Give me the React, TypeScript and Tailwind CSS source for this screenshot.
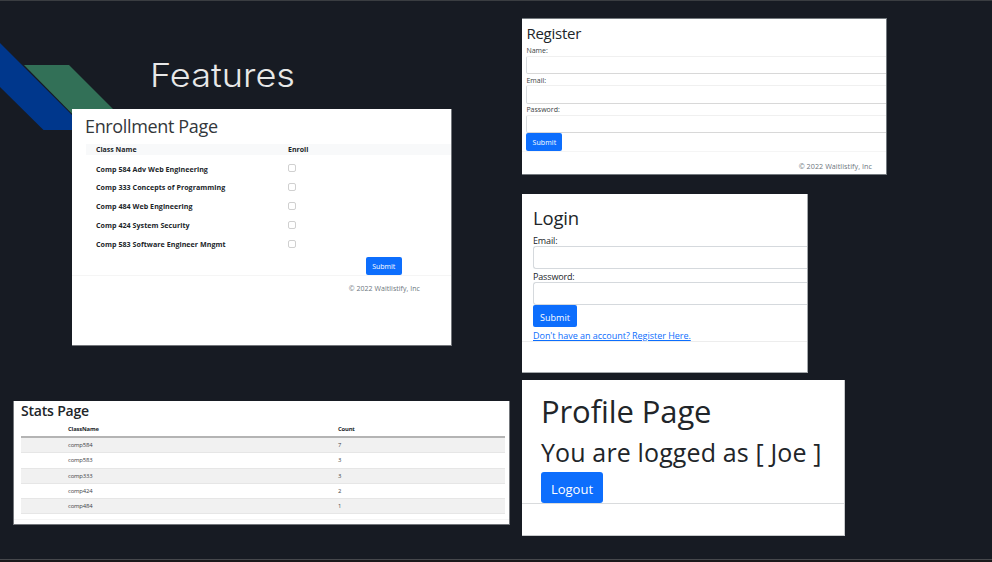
import type { ReactNode } from "react";

const classes = [
  "Comp 584 Adv Web Engineering",
  "Comp 333 Concepts of Programming",
  "Comp 484 Web Engineering",
  "Comp 424 System Security",
  "Comp 583 Software Engineer Mngmt",
];

const stats: [string, number][] = [
  ["comp584", 7],
  ["comp583", 3],
  ["comp333", 3],
  ["comp424", 2],
  ["comp484", 1],
];

function SmallField({ label }: { label: string }) {
  return (
    <label className="block h-[29.5px]">
      <span className="block h-[8.5px] text-[7px] leading-[8px] whitespace-nowrap text-[#3b3f43]">{label}</span>
      <span className="block h-[18.5px] rounded-l-[2px] border border-r-0 border-t-[#f0f0f0] border-b-[#d8d8d8] border-l-[#d8dbde]" />
    </label>
  );
}

function LoginField({ label }: { label: string }) {
  return (
    <label className="block h-[36px]">
      <span className="block h-[13px] text-[9px] leading-[15px] tracking-[-0.15px] whitespace-nowrap">{label}</span>
      <span className="block h-[23px] rounded-l-[3px] border border-r-0 border-[#d5d9dd]" />
    </label>
  );
}

function Card({ className, children }: { className: string; children: ReactNode }) {
  return <section className={`overflow-hidden bg-white ${className}`}>{children}</section>;
}

export default function App() {
  return (
    <main className="relative flex h-[562px] w-[992px] flex-col overflow-hidden bg-[#171b23] font-['Open_Sans','Noto_Sans',sans-serif] text-[#212529]">
      <svg className="absolute top-0 left-0" width="120" height="140" viewBox="0 0 120 140">
        <path d="M24 65H69L115 111V140H98Z" fill="#327057" />
        <path d="M0 43L87 130H43.500L0 87Z" fill="#00378c" />
      </svg>
      <div className="h-px shrink-0 bg-[#3a3d41]" />
      <div className="relative flex h-[558px] shrink-0">
        <div className="flex w-[522px] shrink-0 flex-col">
          <h1 className="mt-[53px] ml-[150px] h-[40px] w-[200px] origin-left scale-x-[1.095] font-['Inter',sans-serif] text-[33px] leading-[42px] font-light whitespace-nowrap text-[#e8e8e8]">
            Features
          </h1>

          <Card className="mt-[15px] ml-[72px] h-[237px] w-[380px] shrink-0 border-r border-b border-[#73767b]">
            <h2 className="mt-[6px] ml-[13px] h-[24px] text-[18px] leading-[23px] tracking-[-0.35px] whitespace-nowrap text-[#33373b]">Enrollment Page</h2>
            <div className="mt-[5px] ml-[14px] flex h-[11px] items-center bg-[#f8f9fa] pl-[10px] text-[7px] leading-[12px] font-bold">
              <span className="w-[192px]">Class Name</span>
              <span>Enroll</span>
            </div>
            <div className="mt-[4px] ml-[24px]">
              {classes.map((name) => (
                <div key={name} className="flex h-[18.8px] items-center text-[7.1px] font-bold tracking-[0.04px] whitespace-nowrap">
                  <span className="w-[192px] pt-px">{name}</span>
                  <span className="size-[8px] rounded-[2px] border border-[#d0d0d0]" />
                </div>
              ))}
            </div>
            <button className="mt-[4px] ml-[294px] block h-[18px] w-[35.500px] rounded-[2px] bg-[#0d6efd] text-[7px] leading-[20px] text-white">Submit</button>
            <div className="h-px bg-[#f5f5f5]" />
            <p className="mt-[8px] mr-[31px] text-right text-[7px] leading-[10px] tracking-[0.04px] text-[#6c757d]">© 2022 Waitlistify, Inc</p>
          </Card>

          <Card className="mt-[55px] ml-[13px] h-[124px] w-[497px] shrink-0 border-r border-b border-l border-[#73767b]">
            <h2 className="ml-[7px] h-[20px] text-[14px] leading-[19px] font-semibold tracking-[-0.2px] whitespace-nowrap">Stats Page</h2>
            <div className="mr-[4px] ml-[7px]">
              <div className="flex h-[17px] border-b-2 border-[#b4b4b4] pl-[47px] text-[5.800px] leading-[17px] font-bold tracking-[-0.15px]">
                <span className="w-[270px]">ClassName</span>
                <span>Count</span>
              </div>
              {stats.map(([name, count], i) => (
                <div
                  key={name}
                  className={`flex h-[15.300px] border-b border-[#e6e6e6] pl-[47px] text-[5.900px] leading-[15px] tracking-[-0.15px] text-[#3f4347] ${i % 2 === 0 ? "bg-[#f1f1f1]" : ""}`}
                >
                  <span className="w-[270px]">{name}</span>
                  <span>{count}</span>
                </div>
              ))}
            </div>
            <div className="mt-[5px] h-px bg-[#f5f5f5]" />
          </Card>
        </div>

        <div className="flex w-[364px] flex-col items-start">
          <Card className="mt-[17px] h-[157px] w-[365px] shrink-0 border border-l-0 border-[#73797e]">
            <div className="ml-[4.4px]">
              <h2 className="h-[28px] text-[15px] leading-[28px] tracking-[-0.25px] whitespace-nowrap">Register</h2>
              <SmallField label="Name:" />
              <SmallField label="Email:" />
              <SmallField label="Password:" />
              <button className="-mt-[2.500px] block h-[18px] w-[36px] rounded-[2px] bg-[#0d6efd] text-[7px] leading-[20px] tracking-[0.1px] text-white">Submit</button>
            </div>
            <div className="h-px bg-[#f5f5f5]" />
            <p className="mt-[9px] mr-[14px] text-right text-[7.2px] leading-[10px] tracking-[0.05px] text-[#6c757d]">© 2022 Waitlistify, Inc</p>
          </Card>

          <Card className="mt-[19px] h-[179px] w-[286px] shrink-0 border-r border-b border-[#a4a8ab]">
            <div className="pt-[10px] pl-[11px]">
              <h2 className="h-[29px] text-[18.500px] leading-[27px] tracking-[-0.2px] whitespace-nowrap">Login</h2>
              <LoginField label="Email:" />
              <LoginField label="Password:" />
              <button className="block h-[22px] w-[44px] rounded-[2px] bg-[#0d6efd] text-[9px] leading-[25px] text-white">Submit</button>
              <a className="block h-[14px] text-[9px] leading-[17px] tracking-[-0.03px] whitespace-nowrap text-[#0d6efd] underline">Don't have an account? Register Here.</a>
            </div>
            <div className="h-px bg-[#ededed]" />
          </Card>

          <Card className="mt-[7px] h-[156px] w-[323px] shrink-0 border-r border-b border-[#c8cacc]">
            <div className="pl-[19px]">
              <h2 className="pt-[10px] text-[31px] leading-[42px] tracking-[-0.1px] whitespace-nowrap">Profile Page</h2>
              <p className="h-[40px] text-[25px] leading-[41px] tracking-[0.13px] whitespace-nowrap">You are logged as [ Joe ]</p>
              <button className="block h-[31px] w-[62px] rounded-[3px] bg-[#0d6efd] text-[13px] leading-[34px] text-white">Logout</button>
            </div>
            <div className="h-px bg-[#d9dbdd]" />
          </Card>
        </div>
      </div>
      <div className="h-px shrink-0 bg-[#46484c]" />
      <div className="h-[2px] shrink-0 bg-[#1a191b]" />
    </main>
  );
}
